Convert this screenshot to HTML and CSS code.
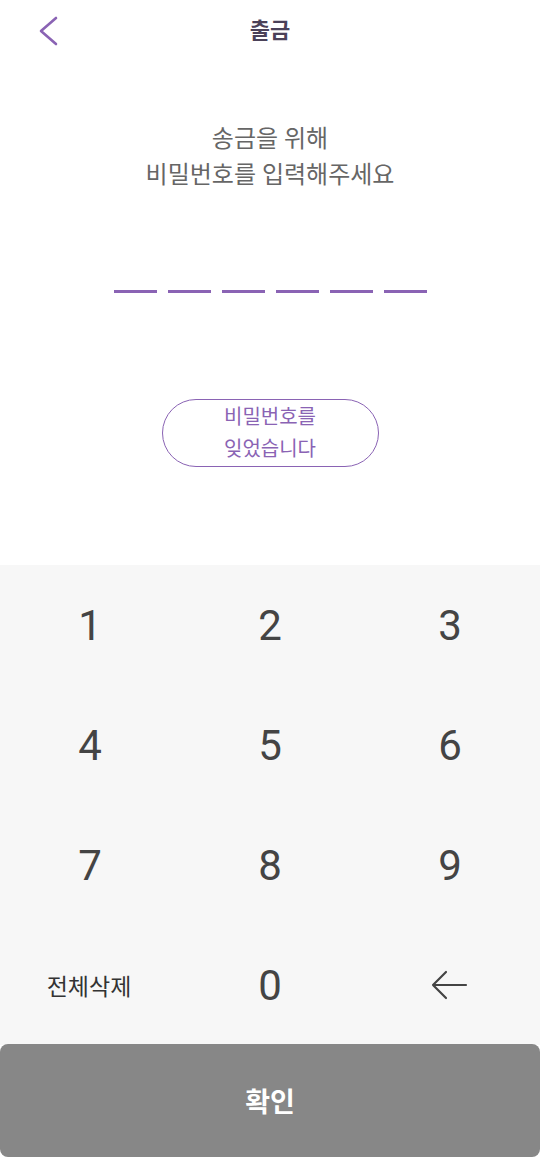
FILE: index.html
```html
<!DOCTYPE html>
<html lang="ko">
<head>
    <meta charset="UTF-8">
    <title>출금</title>
    <link rel="stylesheet" href="styles.css">
</head>
<body>
    <div class="page">
        <div class="header">
            <a class="back" href="#">
                <svg width="24" height="32" viewBox="0 0 24 32">
                    <path d="M20 3 L5 16 L20 29" fill="none" stroke="#8a63b4" stroke-width="2.6" stroke-linecap="round" stroke-linejoin="round"/>
                </svg>
            </a>
            <h1 class="title">출금</h1>
        </div>

        <p class="prompt">송금을 위해<br>비밀번호를 입력해주세요</p>

        <ul class="pin">
            <li></li>
            <li></li>
            <li></li>
            <li></li>
            <li></li>
            <li></li>
        </ul>

        <div class="forgot-wrap">
            <button class="forgot">비밀번호를<br>잊었습니다</button>
        </div>

        <div class="keypad">
            <button class="key">1</button>
            <button class="key">2</button>
            <button class="key">3</button>
            <button class="key">4</button>
            <button class="key">5</button>
            <button class="key">6</button>
            <button class="key">7</button>
            <button class="key">8</button>
            <button class="key">9</button>
            <button class="key key-text">전체삭제</button>
            <button class="key">0</button>
            <button class="key">
                <svg width="38" height="32" viewBox="0 0 38 32">
                    <path d="M15 3 L2 16 L15 29 M2 16 L35 16" fill="none" stroke="#444" stroke-width="2.2" stroke-linecap="round" stroke-linejoin="round"/>
                </svg>
            </button>
        </div>

        <button class="confirm">확인</button>
    </div>
</body>
</html>
```

FILE: styles.css
```css
* {
    box-sizing: border-box;
}

html,
body {
    margin: 0;
    padding: 0;
    background: #fff;
}

body {
    font-family: Roboto, "Noto Sans CJK KR", sans-serif;
    width: 540px;
    height: 1165px;
}

ul,
li {
    margin: 0;
    padding: 0;
    list-style: none;
}

button {
    font-family: inherit;
    border: none;
    background: none;
    padding: 0;
    cursor: pointer;
}

.page {
    display: flex;
    flex-direction: column;
    height: 1165px;
}

.header {
    position: relative;
    height: 62px;
    display: flex;
    align-items: center;
    justify-content: center;
}

.back {
    position: absolute;
    left: 36px;
    top: 15px;
    display: block;
    width: 24px;
    height: 32px;
}

.title {
    margin: 0;
    font-size: 22px;
    font-weight: 700;
    color: #4b4159;
    line-height: 62px;
}

.prompt {
    margin: 59px 0 0;
    text-align: center;
    font-size: 24px;
    line-height: 36px;
    color: #666;
}

.pin {
    display: flex;
    justify-content: center;
    gap: 11px;
    margin-top: 97px;
    height: 4px;
}

.pin li {
    width: 43px;
    height: 3px;
    background: #8a63b4;
}

.forgot-wrap {
    display: flex;
    justify-content: center;
    margin-top: 105px;
}

.forgot {
    width: 217px;
    height: 68px;
    border: 1.3px solid #8a63b4;
    border-radius: 34px;
    color: #8a63b4;
    font-size: 20px;
    line-height: 32px;
    background: #fff;
}

.keypad {
    margin-top: 98px;
    background: #f7f7f7;
    display: grid;
    grid-template-columns: repeat(3, 180px);
    grid-auto-rows: 120px;
    height: 480px;
}

.key {
    display: flex;
    align-items: center;
    justify-content: center;
    font-size: 42px;
    color: #444;
}

.key-text {
    font-size: 23px;
    color: #333;
    padding-right: 2px;
}

.confirm {
    height: 113px;
    margin: -1px 0 0;
    background: #878787;
    border-radius: 8px;
    color: #fff;
    font-size: 27px;
    font-weight: 700;
    position: relative;
}
```
